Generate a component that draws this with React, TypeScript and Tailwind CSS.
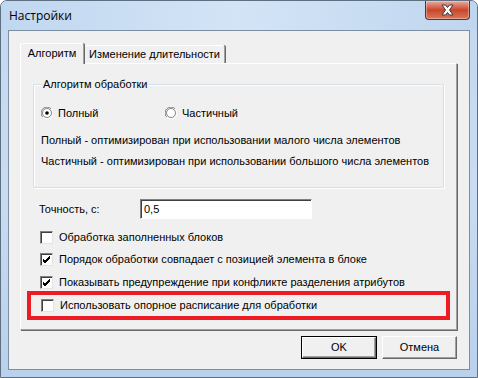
import React from "react";

const font = { fontFamily: '"Liberation Sans", Arial, sans-serif' };

function Check({ checked }: { checked?: boolean }) {
  return (
    <span className="relative inline-block w-[13px] h-[13px] bg-white border border-t-[#808080] border-l-[#808080] border-b-[#e3e3e3] border-r-[#e3e3e3] shadow-[inset_1px_1px_0_#404040]">
      {checked && (
        <svg className="absolute left-[1px] top-[1px]" width="9" height="9" viewBox="0 0 9 9">
          <path d="M1 4 L3 6 L8 1 M1 5 L3 7 L8 2 M1 6 L3 8 L8 3" stroke="#000" strokeWidth="1" fill="none" />
        </svg>
      )}
    </span>
  );
}

function Radio({ checked }: { checked?: boolean }) {
  return (
    <svg width="12" height="12" viewBox="0 0 12 12">
      <path d="M10.2 1.8 A5.6 5.6 0 0 0 1.8 10.2" stroke="#808080" fill="none" />
      <path d="M1.8 10.2 A5.6 5.6 0 0 0 10.2 1.8" stroke="#ffffff" fill="none" />
      <circle cx="6" cy="6" r="4.5" fill="#fff" stroke="#404040" strokeWidth="0.6" />
      {checked && <circle cx="6" cy="6" r="1.8" fill="#000" />}
    </svg>
  );
}

export default function App() {
  return (
    <div
      className="w-[478px] h-[378px] rounded-t-[7px] border border-[#5e6f82] bg-gradient-to-b from-[#c3d9f0] via-[#c9dcf1] to-[#b9d1ec] flex flex-col overflow-hidden"
      style={font}
    >
      {/* Title bar */}
      <div className="h-[29px] flex items-start relative bg-gradient-to-r from-[#c0d7f0] via-[#d3e4f6] to-[#bfd6ef]">
        <span
          className="ml-[8px] mt-[7px] text-[12px] text-black leading-[16px]"
          style={{ fontFamily: '"Open Sans", "Noto Sans", sans-serif' }}
        >
          Настройки
        </span>
        <div className="absolute right-[7px] top-0 w-[45px] h-[19px] rounded-b-[4px] border border-t-0 border-[#6e2a20] bg-gradient-to-b from-[#e9a99b] via-[#c9442c] to-[#d8785a] flex items-center justify-center shadow-[inset_0_0_0_1px_rgba(255,255,255,0.35)]">
          <svg width="15" height="12" viewBox="0 0 15 12">
            <path d="M2 1 L5.5 1 L7.5 3.5 L9.5 1 L13 1 L9.5 6 L13 11 L9.5 11 L7.5 8.5 L5.5 11 L2 11 L5.5 6 Z" fill="#fff" stroke="#3b3b3b" strokeWidth="1" strokeLinejoin="round" />
          </svg>
        </div>
      </div>

      {/* Client area */}
      <div className="mx-[7px] h-[340px] border border-[#7d8ea2] bg-[#f0f0f0] flex flex-col pl-[11px] pr-[12px] pt-[11px] text-[11px] text-black">
        {/* Tabs */}
        <div className="flex items-end h-[21px] relative z-10">
          <div className="h-[21px] w-[64px] bg-[#f0f0f0] border-l border-t border-white border-r border-r-[#a0a0a0] rounded-t-[2px] shadow-[1px_0_0_#696969] flex items-center justify-center mb-[-1px] pb-[2px]">
            Алгоритм
          </div>
          <div className="h-[18px] w-[140px] bg-[#f0f0f0] border-t border-white border-r border-r-[#a0a0a0] shadow-[1px_0_0_#696969] rounded-t-[2px] flex items-center justify-center ml-[1px]">
            Изменение длительности
          </div>
        </div>

        {/* Tab panel */}
        <div className="h-[267px] border border-t-white border-l-white border-r-[#a0a0a0] border-b-[#a0a0a0] shadow-[1px_1px_0_#696969] flex flex-col px-[12px]">
          {/* Group box */}
          <div className="relative mt-[20px] h-[104px] border border-[#d5dfe5] shadow-[inset_1px_1px_0_#fff,1px_1px_0_#fff] rounded-[2px] px-[7px]">
            <span className="absolute left-[8px] top-[-8px] px-[1px] bg-[#f0f0f0] leading-[14px]">Алгоритм обработки</span>
            <div className="flex items-center mt-[21px] h-[14px]">
              <span className="flex items-center gap-[5px] w-[124px]">
                <Radio checked />
                <span>Полный</span>
              </span>
              <span className="flex items-center gap-[5px]">
                <Radio />
                <span>Частичный</span>
              </span>
            </div>
            <div className="mt-[13px] leading-[14px]">Полный - оптимизирован при использовании малого числа элементов</div>
            <div className="mt-[7px] leading-[14px]">Частичный - оптимизирован при использовании большого числа элементов</div>
          </div>

          {/* Precision */}
          <div className="flex items-center mt-[11px] h-[20px] pl-[6px]">
            <span className="w-[101px]">Точность, с:</span>
            <div className="w-[172px] h-[20px] bg-white border border-t-[#808080] border-l-[#808080] border-b-white border-r-white shadow-[inset_1px_1px_0_#404040] flex items-center pl-[3px]">
              0,5
            </div>
          </div>

          {/* Checkboxes */}
          <div className="flex flex-col pl-[7px] mt-[11px]">
            <div className="flex items-center gap-[6px] h-[14px]">
              <Check />
              <span>Обработка заполненных блоков</span>
            </div>
            <div className="flex items-center gap-[6px] h-[14px] mt-[8px]">
              <Check checked />
              <span>Порядок обработки совпадает с позицией элемента в блоке</span>
            </div>
            <div className="flex items-center gap-[6px] h-[14px] mt-[9px]">
              <Check checked />
              <span>Показывать предупреждение при конфликте разделения атрибутов</span>
            </div>
          </div>
          <div className="mt-[2px] ml-[-6px] mr-[-6px] h-[29px] border-[4px] border-[#ed1c24] flex items-center gap-[6px] pl-[10px]">
            <Check />
            <span>Использовать опорное расписание для обработки</span>
          </div>
        </div>

        {/* Buttons */}
        <div className="flex justify-end gap-[5px] mt-[6px]">
          <button className="w-[76px] h-[23px] border border-black bg-[#f0f0f0] flex items-center justify-center text-[11px]">
            <span className="w-full h-full border border-t-white border-l-white border-r-[#696969] border-b-[#696969] shadow-[inset_-1px_-1px_0_#a0a0a0] flex items-center justify-center">
              OK
            </span>
          </button>
          <button className="w-[75px] h-[23px] border border-t-white border-l-white border-r-[#696969] border-b-[#696969] shadow-[inset_-1px_-1px_0_#a0a0a0] bg-[#f0f0f0] flex items-center justify-center text-[11px]">
            Отмена
          </button>
        </div>
      </div>
    </div>
  );
}
